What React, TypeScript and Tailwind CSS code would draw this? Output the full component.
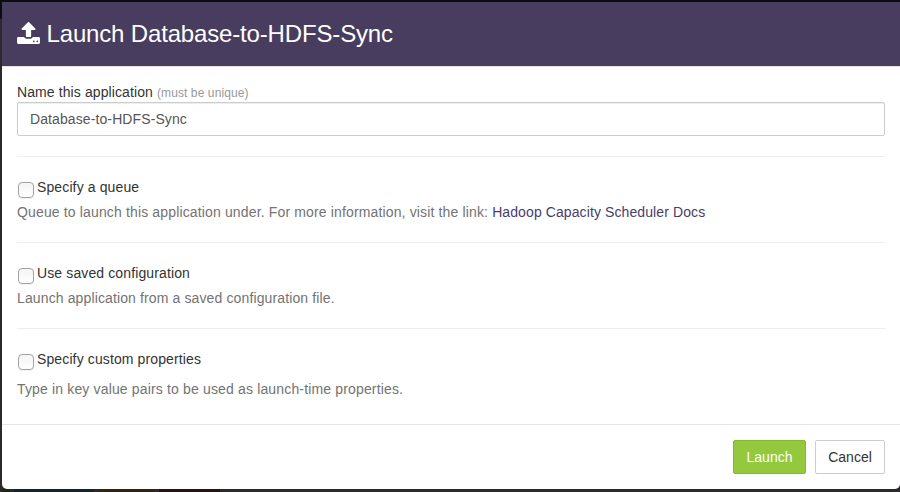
import React from "react";

function UploadIcon() {
  return (
    <svg viewBox="64 64 1664 1600" className="mb-[3px] h-[22px] w-[23px] shrink-0 fill-white" aria-hidden="true">
      <path d="M1344 1472q0-26-19-45t-45-19-45 19-19 45 19 45 45 19 45-19 19-45zm256 0q0-26-19-45t-45-19-45 19-19 45 19 45 45 19 45-19 19-45zm128-224v320q0 40-28 68t-68 28h-1472q-40 0-68-28t-28-68v-320q0-40 28-68t68-28h427q21 56 70.5 92t110.5 36h256q61 0 110.5-36t70.5-92h427q40 0 68 28t28 68zm-325-648q-17 40-59 40h-256v448q0 26-19 45t-45 19h-256q-26 0-45-19t-19-45v-448h-256q-42 0-59-40-17-39 14-69l448-448q18-19 45-19t45 19l448 448q31 30 14 69z" />
    </svg>
  );
}

function Option({ label, helpClass, children }: { label: string; helpClass: string; children: React.ReactNode }) {
  return (
    <section className="mt-5 border-t border-[#eeeeee] pt-5">
      <label className="flex h-5 items-start">
        <input
          type="checkbox"
          className="mt-[5px] ml-px size-4 shrink-0 appearance-none rounded-[4px] border border-[#a2a2a2] bg-linear-to-b from-[#f4f4f4] to-white shadow-[0_1px_1px_rgba(0,0,0,0.06)]"
        />
        <span className="ml-[3px] tracking-[0.12px]">{label}</span>
      </label>
      <p className={`text-[#737373] ${helpClass}`}>{children}</p>
    </section>
  );
}

export default function App() {
  return (
    <div className="h-[492px] w-[900px] overflow-hidden bg-linear-to-b from-[#0c0b0f] from-[18px] to-[#2b292b] to-[19px] pt-[2px] pl-[2px] font-['Liberation_Sans',Arial,sans-serif] text-sm leading-5 text-[#333333]">
      <div className="flex h-[487px] flex-col overflow-hidden rounded-b-[5px] bg-white">
        <header className="flex h-[65px] shrink-0 items-center border-b border-[#e5e5e5] bg-[#483d5e] pl-[15px] text-white">
          <UploadIcon />
          <h1 className="ml-[6.5px] text-2xl leading-6 tracking-[-0.16px]">Launch Database-to-HDFS-Sync</h1>
        </header>
        <main className="h-[357px] shrink-0 px-[15px] pt-[15px]">
          <label htmlFor="app-name" className="block h-5 tracking-[0.1px]">
            Name this application <small className="text-xs text-[#999999]">(must be unique)</small>
          </label>
          <input
            id="app-name"
            defaultValue="Database-to-HDFS-Sync"
            className="block h-[34px] w-full rounded-[2px] border border-[#cccccc] px-3 tracking-[0.1px] text-[#555555] shadow-[inset_0_1px_1px_rgba(0,0,0,0.075)] outline-none"
          />
          <Option label="Specify a queue" helpClass="mt-[5px] tracking-[0.145px]">
            Queue to launch this application under. For more information, visit the link:{" "}
            <a href="#" className="tracking-[0.1px] text-[#483d6a]">Hadoop Capacity Scheduler Docs</a>
          </Option>
          <Option label="Use saved configuration" helpClass="mt-[5px] tracking-[0.125px]">
            Launch application from a saved configuration file.
          </Option>
          <Option label="Specify custom properties" helpClass="mt-[10px] tracking-[0.155px]">
            Type in key value pairs to be used as launch-time properties.
          </Option>
        </main>
        <footer className="flex flex-1 items-start justify-end gap-[9px] border-t border-[#e5e5e5] px-[15px] pt-[15px]">
          <button className="h-[34px] w-[73px] rounded-[2px] border border-[#86b932] bg-[#95c93d] text-white">Launch</button>
          <button className="h-[34px] w-[70px] rounded-[2px] border border-[#cccccc] bg-white">Cancel</button>
        </footer>
      </div>
      {/* Dimmed action buttons of the page behind the dialog */}
      <div className="flex h-[3px] gap-[4px]">
        <span className="w-[8px] bg-[#1c2a0c]" />
        <span className="w-[80px] bg-[#12262d]" />
        <span className="w-[57px] bg-[#33240f]" />
        <span className="w-[61px] bg-[#2f0f10]" />
      </div>
    </div>
  );
}
